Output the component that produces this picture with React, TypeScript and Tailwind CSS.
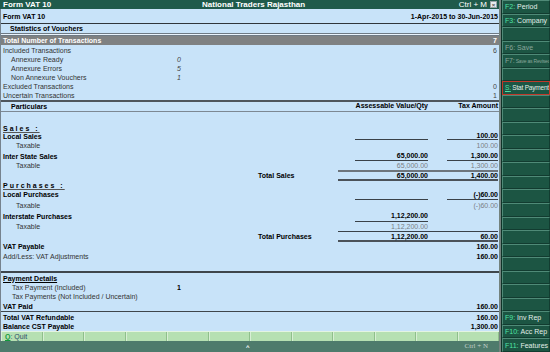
const FONT = "font-['Liberation_Sans',Arial,sans-serif]"

type Key = { k?: string; l?: string; off?: boolean; tiny?: boolean; active?: boolean }

const KEYS: Key[] = [
  { k: 'F2', l: 'Period' },
  { k: 'F3', l: 'Company' },
  {},
  { k: 'F6', l: 'Save', off: true },
  { k: 'F7', l: 'Save as Revised', off: true, tiny: true },
  {},
  { k: 'S', l: 'Stat Payment', active: true },
  ...Array.from({ length: 16 }, () => ({})),
  { k: 'F9', l: 'Inv Rep' },
  { k: 'F10', l: 'Acc Rep' },
  { k: 'F11', l: 'Features' },
]

const STATS: { label: string; value: string; sub?: boolean }[] = [
  { label: 'Included Transactions', value: '6' },
  { label: 'Annexure Ready', value: '0', sub: true },
  { label: 'Annexure Errors', value: '5', sub: true },
  { label: 'Non Annexure Vouchers', value: '1', sub: true },
  { label: 'Excluded Transactions', value: '0' },
  { label: 'Uncertain Transactions', value: '1' },
]

function Cells({
  av,
  tax,
  avLine,
  taxLine,
  dim,
}: {
  av?: string
  tax?: string
  avLine?: boolean
  taxLine?: boolean
  dim?: boolean
}) {
  const tone = dim ? 'text-[#7a7f85] font-normal' : 'font-bold text-black'
  return (
    <>
      <div
        className={`w-[73px] h-full flex items-center justify-end whitespace-nowrap ${tone} ${
          avLine ? 'border-b border-[#3a4148]' : ''
        }`}
      >
        {av}
      </div>
      <div className="w-[19px]" />
      <div
        className={`w-[51px] h-full flex items-center justify-end whitespace-nowrap ${tone} ${
          taxLine ? 'border-b border-[#3a4148]' : ''
        }`}
      >
        {tax}
      </div>
      <div className="w-[1px]" />
    </>
  )
}

function TotalRow({ label, av, tax, topThin }: { label: string; av: string; tax: string; topThin?: boolean }) {
  return (
    <div className="flex h-[11px]">
      <div className="w-[257px]" />
      <div className="w-[80px] flex items-center font-bold text-black whitespace-nowrap">{label}</div>
      <div
        className={`w-[160px] flex border-b-2 border-b-[#4b5259] ${
          topThin ? 'border-t border-t-[#3a4148]' : 'border-t-2 border-t-[#6d757c]'
        }`}
      >
        <div className="flex-1 flex items-center justify-end font-bold text-black">{av}</div>
        <div className="w-[19px]" />
        <div className="w-[51px] flex items-center justify-end font-bold text-black">{tax}</div>
      </div>
      <div className="w-[1px]" />
    </div>
  )
}

export default function App() {
  return (
    <div className={`${FONT} w-[550px] h-[352px] flex overflow-hidden bg-[#c8e3f9] text-[7px] leading-none text-[#333]`}>
      {/* Main area */}
      <div className="w-[499px] flex flex-col">
        {/* Title bar */}
        <div className="h-[9px] flex items-center bg-[#1f5a4b] text-white font-bold text-[8px]">
          <div className="w-[202px] pl-[3px]">Form VAT 10</div>
          <div className="flex-1">National Traders Rajasthan</div>
          <div className="pr-[3px] font-normal">Ctrl + M</div>
          <div className="w-[7px] h-[7px] mr-[2px] bg-[#e8ecef] border border-[#9aa4a8] flex items-center justify-center text-[6px] text-[#555]">
            ×
          </div>
        </div>

        <div className="flex-1 flex flex-col border-l border-[#76838e]">
          {/* Header */}
          <div className="h-[15px] flex items-center justify-between border-b border-[#2f353a] pl-[2px] pr-[1px] font-bold text-black">
            <span>Form VAT 10</span>
            <span>1-Apr-2015 to 30-Jun-2015</span>
          </div>
          <div className="h-[9px] flex items-center pl-[9px] font-bold text-black">Statistics of Vouchers</div>
          <div className="h-[3px] border-y border-[#6e7a85] bg-[#e9f3fc]" />
          <div className="h-[9px] flex items-center justify-between bg-[#7f8182] text-white font-bold pl-[2px] pr-[2px]">
            <span>Total Number of Transactions</span>
            <span>7</span>
          </div>
          <div className="h-[1px]" />

          {STATS.map((s) => (
            <div key={s.label} className="h-[9px] flex items-center pr-[2px]">
              {s.sub ? (
                <>
                  <span className="pl-[10px] w-[176px]">{s.label}</span>
                  <span className="italic text-[#444] flex-1">{s.value}</span>
                </>
              ) : (
                <>
                  <span className="pl-[2px] flex-1">{s.label}</span>
                  <span className="text-[#444]">{s.value}</span>
                </>
              )}
            </div>
          ))}

          {/* Particulars header */}
          <div className="h-[12px] flex items-center border-t-2 border-t-[#4e565d] border-b border-b-[#7d8893] font-bold text-black">
            <div className="flex-1 pl-[10px]">Particulars</div>
            <Cells />
          </div>
          <div className="h-0 flex -mt-[10px] mb-[10px] font-bold text-black">
            <div className="flex-1" />
            <div className="w-[73px] flex justify-end whitespace-nowrap">Assessable Value/Qty</div>
            <div className="w-[19px]" />
            <div className="w-[51px] flex justify-end whitespace-nowrap">Tax Amount</div>
            <div className="w-[1px]" />
          </div>

          <div className="h-[12px]" />

          {/* Sales */}
          <div className="h-[8px] flex items-center pl-[2px] font-bold text-black">
            <span className="tracking-[2px] underline underline-offset-[1px] decoration-[#555]">Sales :</span>
          </div>
          <div className="h-[8px] flex items-center">
            <div className="flex-1 pl-[2px] font-bold text-black">Local Sales</div>
            <Cells tax="100.00" avLine taxLine />
          </div>
          <div className="h-[11px] flex items-center">
            <div className="flex-1 pl-[15px]">Taxable</div>
            <Cells tax="100.00" dim />
          </div>
          <div className="h-[10px] flex items-center">
            <div className="flex-1 pl-[2px] font-bold text-black">Inter State Sales</div>
            <Cells av="65,000.00" tax="1,300.00" avLine taxLine />
          </div>
          <div className="h-[9px] flex items-center">
            <div className="flex-1 pl-[15px]">Taxable</div>
            <Cells av="65,000.00" tax="1,300.00" dim />
          </div>
          <TotalRow label="Total Sales" av="65,000.00" tax="1,400.00" />

          {/* Purchases */}
          <div className="h-[8px] flex items-center pl-[2px] font-bold text-black">
            <span className="tracking-[2px] underline underline-offset-[1px] decoration-[#555]">Purchases :</span>
          </div>
          <div className="h-[11px] flex items-center">
            <div className="flex-1 pl-[2px] font-bold text-black">Local Purchases</div>
            <Cells tax="(-)60.00" avLine taxLine />
          </div>
          <div className="h-[10px] flex items-center">
            <div className="flex-1 pl-[15px]">Taxable</div>
            <Cells tax="(-)60.00" dim />
          </div>
          <div className="h-[12px] flex items-center">
            <div className="flex-1 pl-[2px] font-bold text-black">Interstate Purchases</div>
            <Cells av="1,12,200.00" avLine />
          </div>
          <div className="h-[9px] flex items-center">
            <div className="flex-1 pl-[15px]">Taxable</div>
            <Cells av="1,12,200.00" dim />
          </div>
          <TotalRow label="Total Purchases" av="1,12,200.00" tax="60.00" topThin />

          <div className="h-[9px] flex items-center">
            <div className="flex-1 pl-[2px] font-bold text-black">VAT Payable</div>
            <Cells tax="160.00" />
          </div>
          <div className="h-[10px] flex items-center">
            <div className="flex-1 pl-[2px]">Add/Less: VAT Adjustments</div>
            <Cells tax="160.00" />
          </div>

          <div className="flex-1" />

          {/* Payment details */}
          <div className="h-[12px] flex items-center border-t-2 border-[#3f464c] pl-[2px] font-bold text-black">
            <span className="underline underline-offset-[1px]">Payment Details</span>
          </div>
          <div className="h-[9px] flex items-center">
            <span className="pl-[11px] w-[176px]">Tax Payment (Included)</span>
            <span className="font-bold text-black">1</span>
          </div>
          <div className="h-[9px] flex items-center pl-[11px]">Tax Payments (Not Included / Uncertain)</div>
          <div className="h-[11px] flex items-center border-b border-[#3f464c]">
            <div className="flex-1 pl-[2px] font-bold text-black">VAT Paid</div>
            <Cells tax="160.00" />
          </div>
          <div className="h-[10px] flex items-center">
            <div className="flex-1 pl-[2px] font-bold text-black">Total VAT Refundable</div>
            <Cells tax="160.00" />
          </div>
          <div className="h-[9px] flex items-center">
            <div className="flex-1 pl-[2px] font-bold text-black">Balance CST Payable</div>
            <Cells tax="1,300.00" />
          </div>

          {/* Button bar */}
          <div className="h-[10px] grid grid-cols-12 bg-[#b6e0b2] border-t border-[#e4f4e2]">
            {Array.from({ length: 12 }, (_, i) => (
              <div key={i} className="flex items-center pl-[3px] border-r border-[#8fbf8c] border-l border-l-[#d8efd5]">
                {i === 0 && (
                  <span className="text-[#2c4d6b]">
                    <span className="text-[#129a3c] font-bold underline">Q</span>: Quit
                  </span>
                )}
              </div>
            ))}
          </div>
        </div>

        {/* Status strip */}
        <div className="h-[11px] flex items-center bg-[#4e7b6c] text-[#c3d2cb]">
          <div className="w-[246px]" />
          <span className="text-white text-[6px] font-bold">^</span>
          <div className="flex-1" />
          <span className="pr-[11px] font-['Liberation_Serif',serif]">Ctrl + N</span>
        </div>
      </div>

      {/* Right key panel */}
      <div className="w-[51px] flex flex-col bg-[#0f3328] border-l-2 border-[#74837e] pl-[1px]">
        {KEYS.map((key, i) => (
          <div
            key={i}
            className={`flex-1 flex items-center overflow-hidden whitespace-nowrap px-[2px] bg-[#1c5543] border ${
              key.active
                ? 'border-[#c0392b]'
                : 'border-t-[#4f8a77] border-l-[#4f8a77] border-b-[#123c30] border-r-[#123c30]'
            }`}
          >
            {key.k && (
              <span
                className={`${key.tiny ? 'text-[5px] tracking-[-0.2px]' : key.active ? 'text-[6.5px] tracking-[-0.2px]' : 'text-[7px]'} ${
                  key.off ? 'text-[#8aa69b]' : 'text-[#e2efe9]'
                }`}
              >
                <span className={`${key.off ? 'text-[#8aa69b]' : 'text-[#4fe3a6]'} ${key.active ? 'underline' : ''} ${key.tiny ? 'text-[7px]' : ''}`}>
                  {key.k}:
                </span>{' '}
                {key.l}
              </span>
            )}
          </div>
        ))}
      </div>
    </div>
  )
}
